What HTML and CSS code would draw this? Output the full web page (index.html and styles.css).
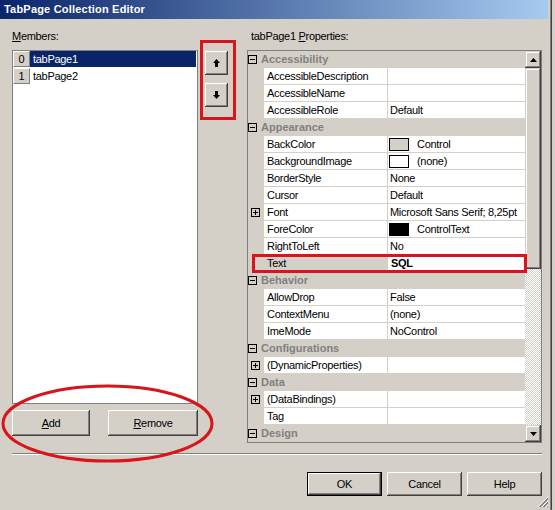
FILE: index.html
```html
<!DOCTYPE html>
<html>
<head>
<meta charset="utf-8">
<title>TabPage Collection Editor</title>
<link rel="stylesheet" href="styles.css">
</head>
<body>
<div class="window">
  <div class="titlebar">TabPage Collection Editor</div>
  <div class="content">
    <div class="main">
      <div class="members">
        <div class="label"><u>M</u>embers:</div>
        <div class="listbox">
          <div class="item selected"><span class="idx">0</span><span class="name">tabPage1</span></div>
          <div class="item"><span class="idx">1</span><span class="name">tabPage2</span></div>
        </div>
        <div class="list-buttons">
          <button class="btn btn-add"><u>A</u>dd</button>
          <button class="btn btn-remove"><u>R</u>emove</button>
        </div>
      </div>
      <div class="order">
        <button class="btn btn-arrow"><svg width="7" height="8" viewBox="0 0 7 8"><path d="M3.5 0 L7 4 H5 V8 H2 V4 H0 Z" fill="#000"/></svg></button>
        <button class="btn btn-arrow"><svg width="7" height="8" viewBox="0 0 7 8"><path d="M3.5 8 L7 4 H5 V0 H2 V4 H0 Z" fill="#000"/></svg></button>
      </div>
      <div class="props">
        <div class="label props-label">tabPage1 <u>P</u>roperties:</div>
        <div class="grid">
          <div class="rows">
            <div class="row cat"><span class="m"><svg class="pm" width="9" height="9" viewBox="0 0 9 9"><rect x="0.5" y="0.5" width="8" height="8" fill="none" stroke="#000"/><path d="M2 4.5 H7" stroke="#000"/></svg></span><span class="ct">Accessibility</span></div>
            <div class="row"><span class="m"></span><span class="n">AccessibleDescription</span><span class="v"></span></div>
            <div class="row"><span class="m"></span><span class="n">AccessibleName</span><span class="v"></span></div>
            <div class="row"><span class="m"></span><span class="n">AccessibleRole</span><span class="v">Default</span></div>
            <div class="row cat"><span class="m"><svg class="pm" width="9" height="9" viewBox="0 0 9 9"><rect x="0.5" y="0.5" width="8" height="8" fill="none" stroke="#000"/><path d="M2 4.5 H7" stroke="#000"/></svg></span><span class="ct">Appearance</span></div>
            <div class="row"><span class="m"></span><span class="n">BackColor</span><span class="v"><span class="sw sw-control"></span>Control</span></div>
            <div class="row"><span class="m"></span><span class="n">BackgroundImage</span><span class="v"><span class="sw sw-white"></span>(none)</span></div>
            <div class="row"><span class="m"></span><span class="n">BorderStyle</span><span class="v">None</span></div>
            <div class="row"><span class="m"></span><span class="n">Cursor</span><span class="v">Default</span></div>
            <div class="row"><span class="m"><svg class="pm" width="9" height="9" viewBox="0 0 9 9"><rect x="0.5" y="0.5" width="8" height="8" fill="none" stroke="#000"/><path d="M2 4.5 H7 M4.5 2 V7" stroke="#000"/></svg></span><span class="n">Font</span><span class="v">Microsoft Sans Serif; 8,25pt</span></div>
            <div class="row"><span class="m"></span><span class="n">ForeColor</span><span class="v"><span class="sw sw-black"></span>ControlText</span></div>
            <div class="row"><span class="m"></span><span class="n">RightToLeft</span><span class="v">No</span></div>
            <div class="row sel"><span class="m"></span><span class="n">Text</span><span class="v"><b>SQL</b></span></div>
            <div class="row cat"><span class="m"><svg class="pm" width="9" height="9" viewBox="0 0 9 9"><rect x="0.5" y="0.5" width="8" height="8" fill="none" stroke="#000"/><path d="M2 4.5 H7" stroke="#000"/></svg></span><span class="ct">Behavior</span></div>
            <div class="row"><span class="m"></span><span class="n">AllowDrop</span><span class="v">False</span></div>
            <div class="row"><span class="m"></span><span class="n">ContextMenu</span><span class="v">(none)</span></div>
            <div class="row"><span class="m"></span><span class="n">ImeMode</span><span class="v">NoControl</span></div>
            <div class="row cat"><span class="m"><svg class="pm" width="9" height="9" viewBox="0 0 9 9"><rect x="0.5" y="0.5" width="8" height="8" fill="none" stroke="#000"/><path d="M2 4.5 H7" stroke="#000"/></svg></span><span class="ct">Configurations</span></div>
            <div class="row"><span class="m"><svg class="pm" width="9" height="9" viewBox="0 0 9 9"><rect x="0.5" y="0.5" width="8" height="8" fill="none" stroke="#000"/><path d="M2 4.5 H7 M4.5 2 V7" stroke="#000"/></svg></span><span class="n">(DynamicProperties)</span><span class="v"></span></div>
            <div class="row cat"><span class="m"><svg class="pm" width="9" height="9" viewBox="0 0 9 9"><rect x="0.5" y="0.5" width="8" height="8" fill="none" stroke="#000"/><path d="M2 4.5 H7" stroke="#000"/></svg></span><span class="ct">Data</span></div>
            <div class="row"><span class="m"><svg class="pm" width="9" height="9" viewBox="0 0 9 9"><rect x="0.5" y="0.5" width="8" height="8" fill="none" stroke="#000"/><path d="M2 4.5 H7 M4.5 2 V7" stroke="#000"/></svg></span><span class="n">(DataBindings)</span><span class="v"></span></div>
            <div class="row"><span class="m"></span><span class="n">Tag</span><span class="v"></span></div>
            <div class="row cat"><span class="m"><svg class="pm" width="9" height="9" viewBox="0 0 9 9"><rect x="0.5" y="0.5" width="8" height="8" fill="none" stroke="#000"/><path d="M2 4.5 H7" stroke="#000"/></svg></span><span class="ct">Design</span></div>
          </div>
          <div class="vscroll">
            <div class="sb-btn"><svg width="7" height="4" viewBox="0 0 7 4"><path d="M3.5 0 L7 4 H0 Z" fill="#000"/></svg></div>
            <div class="thumb"></div>
            <div class="track"></div>
            <div class="sb-btn"><svg width="7" height="4" viewBox="0 0 7 4"><path d="M3.5 4 L7 0 H0 Z" fill="#000"/></svg></div>
          </div>
        </div>
      </div>
    </div>
    <div class="separator"></div>
    <div class="dialog-buttons">
      <button class="btn btn-dlg btn-default">OK</button>
      <button class="btn btn-dlg">Cancel</button>
      <button class="btn btn-dlg">Help</button>
    </div>
  </div>
  <svg class="grip" width="12" height="12" viewBox="0 0 12 12">
    <path d="M11 1 L1 11 M11 5 L5 11 M11 9 L9 11" stroke="#fff" stroke-width="1"/>
    <path d="M11 2 L2 11 M11 3 L3 11 M11 6 L6 11 M11 7 L7 11 M11 10 L10 11" stroke="#808080" stroke-width="1"/>
  </svg>
  <div class="mark mark-order"></div>
  <div class="mark mark-text"></div>
  <svg class="mark-oval" width="216" height="82" viewBox="0 0 216 82">
    <ellipse cx="107.5" cy="40.5" rx="104.5" ry="37.5" fill="none" stroke="#d8141c" stroke-width="3"/>
  </svg>
</div>
</body>
</html>
```

FILE: styles.css
```css
* { box-sizing: border-box; }
html, body { margin: 0; padding: 0; }
body {
  background: #d4d0c8;
  font-family: "Liberation Sans", Arial, sans-serif;
  font-size: 11px;
  letter-spacing: -0.3px;
  color: #000;
  width: 555px;
  height: 510px;
  overflow: hidden;
}
.window {
  position: relative;
  width: 552px;
  height: 510px;
  border-right: 1px solid #404040;
  box-shadow: inset -1px 0 #808080;
}
.titlebar {
  width: 548px;
  height: 19px;
  background: linear-gradient(to right, #0a246a, #a6caf0);
  color: #fff;
  font-weight: bold;
  line-height: 19px;
  padding-left: 4px;
  letter-spacing: 0.2px;
  white-space: nowrap;
}
.content { padding: 11px 0 0 12px; }
.main { display: flex; align-items: flex-start; }
.members { width: 186px; }
.order {
  width: 23px;
  margin-left: 7px;
  margin-top: 21px;
  display: flex;
  flex-direction: column;
  gap: 8px;
}
.props { width: 295px; margin-left: 19px; }
.label { height: 20px; line-height: 13px; white-space: nowrap; }
.props-label { padding-left: 4px; }

.listbox {
  height: 354px;
  border: 1px solid #808080;
  background: #fff;
}
.item { display: flex; height: 17px; line-height: 16px; }
.idx {
  width: 17px;
  height: 16px;
  background: #d4d0c8;
  border-top: 1px solid #fff;
  border-left: 1px solid #fff;
  border-right: 1px solid #808080;
  border-bottom: 1px solid #808080;
  text-align: center;
  line-height: 14px;
}
.name { flex: 1; padding-left: 3px; margin-right: 1px; height: 16px; }
.item.selected .name { background: #0a246a; color: #fff; }

.btn {
  font: inherit;
  letter-spacing: inherit;
  color: #000;
  background: #d4d0c8;
  border: none;
  padding: 0;
  margin: 0;
  box-shadow: inset -1px -1px #404040, inset 1px 1px #fff, inset -2px -2px #808080, inset 2px 2px #d4d0c8;
  display: flex;
  align-items: center;
  justify-content: center;
}
.list-buttons {
  display: flex;
  justify-content: space-between;
  margin-top: 6px;
}
.btn-add { width: 78px; height: 26px; }
.btn-remove { width: 90px; height: 26px; }
.btn-arrow { width: 23px; height: 24px; }

.grid {
  height: 393px;
  border: 1px solid #808080;
  display: flex;
  background: #d4d0c8;
}
.rows { width: 277px; }
.row {
  display: grid;
  grid-template-columns: 15px 123px 138px;
  column-gap: 1px;
  height: 17px;
  padding-bottom: 1px;
  background: #d4d0c8;
  line-height: 16px;
}
.m { display: flex; align-items: center; justify-content: center; height: 16px; }
.n, .v {
  background: #fff;
  white-space: nowrap;
  overflow: hidden;
  height: 16px;
}
.n { padding-left: 3px; }
.v { padding-left: 1px; display: flex; align-items: center; }
.v b { padding-left: 1px; }
.row > .v:not(:has(.sw)) { padding-left: 2px; }
.row.sel .n { background: #d4d0c8; }
.row.cat {
  display: flex;
}
.ct {
  padding-left: 3px;
  font-weight: bold;
  color: #808080;
  letter-spacing: 0;
}
.sw {
  display: inline-block;
  width: 20px;
  height: 13px;
  border: 1px solid #000;
  margin-right: 8px;
  flex: none;
}
.sw-control { background: #d4d0c8; }
.sw-white { background: #fff; }
.sw-black { background: #000; }

.vscroll {
  width: 16px;
  display: flex;
  flex-direction: column;
}
.sb-btn, .thumb {
  background: #d4d0c8;
  box-shadow: inset -1px -1px #404040, inset 1px 1px #d4d0c8, inset -2px -2px #808080, inset 2px 2px #fff;
}
.sb-btn {
  height: 17px;
  display: flex;
  align-items: center;
  justify-content: center;
}
.thumb { height: 201px; }
.track {
  flex: 1;
  background-color: #fff;
  background-image: conic-gradient(#d4d0c8 25%, #fff 0 50%, #d4d0c8 0 75%, #fff 0);
  background-size: 2px 2px;
}

.separator {
  width: 530px;
  height: 2px;
  margin-top: 10px;
  border-top: 1px solid #808080;
  border-bottom: 1px solid #fff;
}
.dialog-buttons {
  width: 530px;
  margin-top: 17px;
  display: flex;
  justify-content: flex-end;
  gap: 5px;
}
.btn-dlg { width: 75px; height: 24px; }
.btn-default {
  box-shadow: inset 0 0 0 1px #000, inset -2px -2px #404040, inset 2px 2px #fff, inset -3px -3px #808080;
}

.grip { position: absolute; right: 2px; bottom: 2px; }
.mark {
  position: absolute;
  border: 3px solid #d8141c;
}
.mark-order { left: 200px; top: 40px; width: 36px; height: 80px; }
.mark-text { left: 252px; top: 254px; width: 275px; height: 19px; }
.mark-oval { position: absolute; left: 0; top: 383px; }
```
